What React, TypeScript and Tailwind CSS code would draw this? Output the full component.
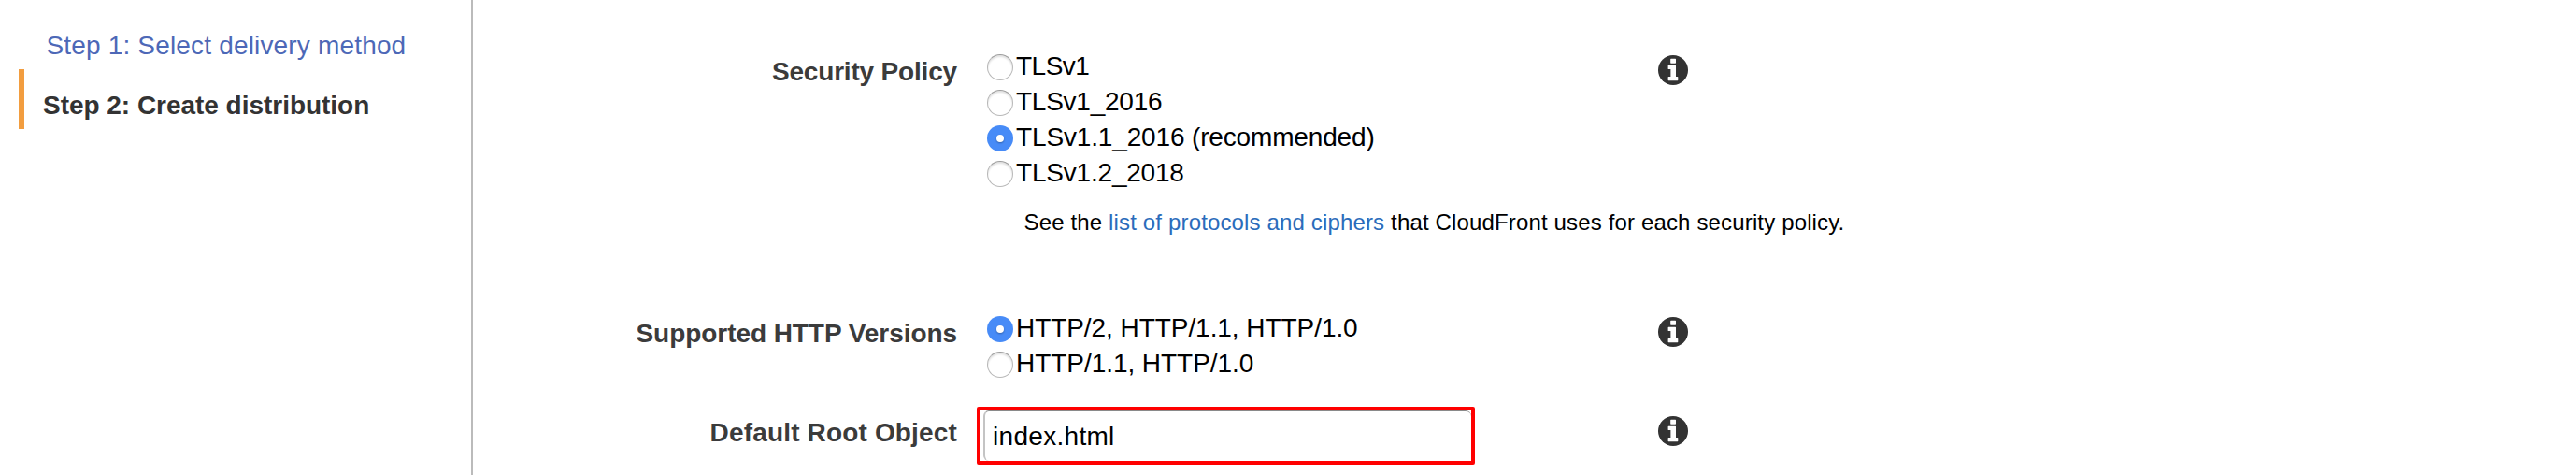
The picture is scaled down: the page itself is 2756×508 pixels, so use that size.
import type { ReactNode } from 'react';

function InfoIcon() {
  return (
    <svg viewBox="0 0 32 32" className="mt-2 h-8 w-8 shrink-0">
      <circle cx="16" cy="16" r="16" fill="#333333" />
      <path
        fill="#ffffff"
        d="M13.8 3.7h4.6a.6.6 0 0 1 .6.6v3.8a.6.6 0 0 1-.6.6h-4.6a.6.6 0 0 1-.6-.6V4.3a.6.6 0 0 1 .6-.6zM11.2 10.7h7.2a.6.6 0 0 1 .6.6V23h1.7a.6.6 0 0 1 .6.6v3a.6.6 0 0 1-.6.6h-9.5a.6.6 0 0 1-.6-.6v-3a.6.6 0 0 1 .6-.6h2.2v-8h-2.2a.6.6 0 0 1-.6-.6v-3.1a.6.6 0 0 1 .6-.6z"
      />
    </svg>
  );
}

function Radio({ checked = false, className, children }: { checked?: boolean; className: string; children: ReactNode }) {
  return (
    <label className="flex h-[38px] items-start">
      {checked ? (
        <span className="mt-[7px] flex h-7 w-7 shrink-0 items-center justify-center rounded-full bg-[#478bf7]">
          <span className="h-2 w-2 rounded-full bg-white shadow-[0_1px_2px_rgba(0,0,0,0.3)]" />
        </span>
      ) : (
        <span className="mt-[7px] h-7 w-7 shrink-0 rounded-full border border-[#b8b8b8] border-t-[#9c9c9c] bg-white shadow-[inset_0_2px_2px_rgba(0,0,0,0.12)]" />
      )}
      <span className={`ml-[3px] whitespace-nowrap text-[28px] leading-[40px] text-black ${className}`}>{children}</span>
    </label>
  );
}

function Row({ label, labelClass, height, children }: { label: string; labelClass: string; height: string; children: ReactNode }) {
  return (
    <div className={`flex items-start ${height}`}>
      <div className={`w-[518px] shrink-0 pt-[7px] text-right text-[28px] font-bold leading-[38px] text-[#3b3b3b] ${labelClass}`}>
        {label}
      </div>
      <div className="ml-8 w-[718px] shrink-0">{children}</div>
      <InfoIcon />
    </div>
  );
}

export default function App() {
  return (
    <div className="flex h-[508px] w-[2756px] overflow-hidden bg-white font-['Liberation_Sans',Arial,sans-serif]">
      <nav className="flex w-[506px] shrink-0 flex-col border-r-2 border-[#bbbbbb] pt-2.5 text-[28px] leading-[78px]">
        <a className="ml-[49.5px] h-16 whitespace-nowrap tracking-[0.17px] text-[#4d68b7]">Step 1: Select delivery method</a>
        <div className="ml-5 h-16 whitespace-nowrap border-l-[6px] border-[#f29d3f] pl-5 font-bold tracking-[-0.03px] text-[#333333]">
          Step 2: Create distribution
        </div>
      </nav>
      <main className="flex flex-col pt-[51px]">
        <Row label="Security Policy" labelClass="tracking-[-0.18px]" height="h-[280px]">
          <Radio className="tracking-[-0.5px]">TLSv1</Radio>
          <Radio className="tracking-[-0.25px]">TLSv1_2016</Radio>
          <Radio checked className="tracking-[-0.15px]">TLSv1.1_2016 (recommended)</Radio>
          <Radio className="tracking-[-0.2px]">TLSv1.2_2018</Radio>
          <p className="ml-[39.5px] mt-[19px] whitespace-nowrap text-[24px] leading-8 tracking-[0.15px] text-black">
            See the <a className="text-[#2b6cbb]">list of protocols and ciphers</a> that CloudFront uses for each security policy.
          </p>
        </Row>
        <Row label="Supported HTTP Versions" labelClass="tracking-[-0.06px]" height="h-[106px]">
          <Radio checked className="tracking-[-0.06px]">HTTP/2, HTTP/1.1, HTTP/1.0</Radio>
          <Radio className="tracking-[-0.05px]">HTTP/1.1, HTTP/1.0</Radio>
        </Row>
        <Row label="Default Root Object" labelClass="tracking-[0.16px]" height="h-[71px]">
          <div className="-ml-[11px] -mt-0.5 h-[62px] w-[533px] rounded-[2px] border-4 border-[#ff0000] bg-white pl-[3px]">
            <div className="h-full rounded-[6px] border-l-2 border-t border-[#c4c4c4] border-t-[#8a8a8a] pl-2 text-[28px] leading-[54px] tracking-[0.3px] text-black">
              index.html
            </div>
          </div>
        </Row>
      </main>
    </div>
  );
}
